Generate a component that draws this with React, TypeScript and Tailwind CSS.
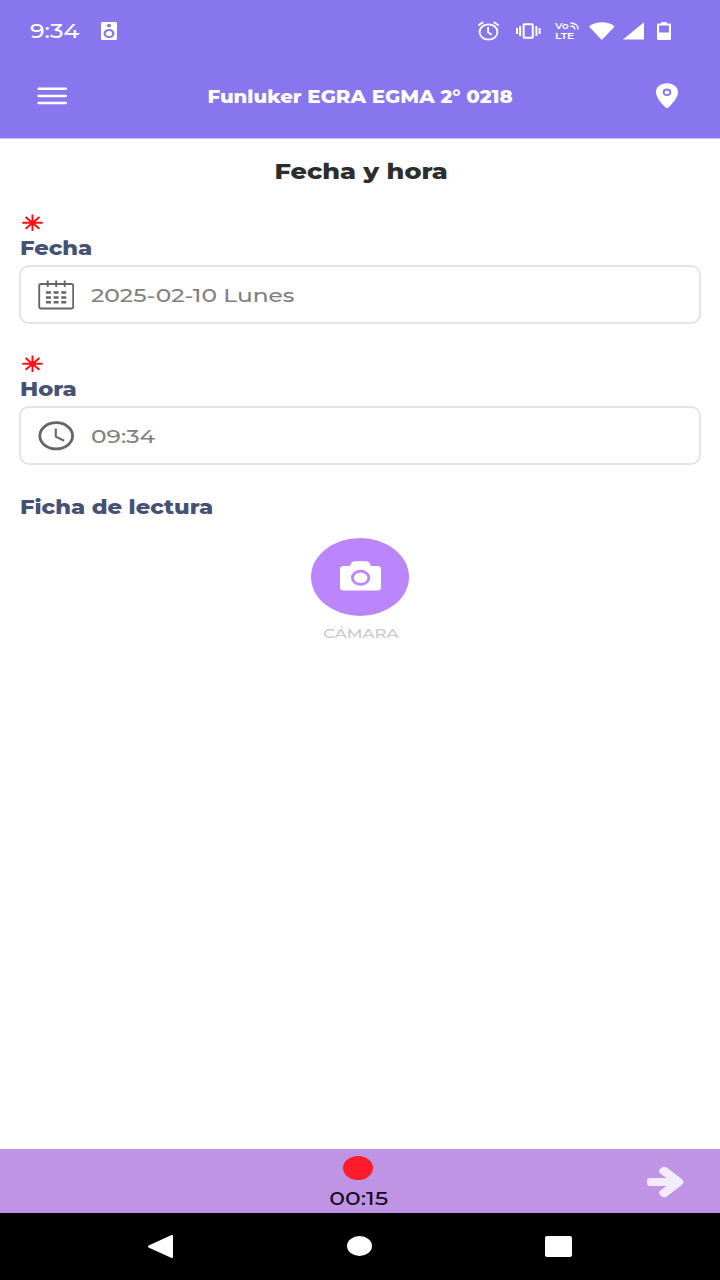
import type { ReactNode } from "react";

function RequiredMark() {
  return (
    <svg className="ml-[3px] block h-[17px] w-[21px]" viewBox="0 0 21 17" fill="none" stroke="#ff0d12" strokeWidth="2" aria-label="Obligatorio">
      <path d="M10.5 0.6V17M0.3 8.8H20.7M3.6 2.9L17.4 14.7M17.4 2.9L3.6 14.7" />
    </svg>
  );
}

function CalendarIcon() {
  return (
    <svg className="h-[30px] w-[36px]" viewBox="0 0 36 30" fill="none" stroke="#666" strokeWidth="1.9">
      <rect x="1.2" y="4" width="34" height="24.5" rx="1.8" />
      <path d="M9.7 0.6V7M18.2 0.6V7M26.7 0.6V7" />
      <path d="M8 12.6H13M15.6 12.6H20.6M23.2 12.6H28.2M8 17.4H13M15.6 17.4H20.6M23.2 17.4H28.2M8 22.2H13M15.6 22.2H20.6M23.2 22.2H28.2" strokeWidth="2.5" />
    </svg>
  );
}

function ClockIcon() {
  return (
    <svg className="h-[30px] w-[36px]" viewBox="0 0 36 30" fill="none" stroke="#666">
      <ellipse cx="18.2" cy="14.8" rx="16.4" ry="13.1" strokeWidth="2.8" />
      <path d="M17.8 7.6V15.6L26.2 19.8" strokeWidth="2.1" />
    </svg>
  );
}

function Field({ label, icon, children }: { label: string; icon: ReactNode; children: string }) {
  return (
    <section>
      <RequiredMark />
      <h2 className="mt-[5px] h-[26px] pl-[1px] text-[19px] leading-[26px] font-extrabold text-[#465174]">
        <span className="inline-block origin-left scale-x-[1.19]">{label}</span>
      </h2>
      <div className="mt-[3px] flex h-[59px] w-[682px] items-center rounded-[10px] border-2 border-[#e4e4e4] pl-[17px]">
        {icon}
        <span className="mt-[3px] ml-[17px] text-[19px] leading-6 font-medium text-[#808080]">
          <span className="inline-block origin-left scale-x-[1.225]">{children}</span>
        </span>
      </div>
    </section>
  );
}

function StatusIcons() {
  return (
    <div className="flex items-center text-white">
      {/* alarm */}
      <svg className="h-[20px] w-[22px]" viewBox="0 0 22 20" fill="none" stroke="currentColor" strokeWidth="1.8">
        <ellipse cx="10.5" cy="11" rx="8.9" ry="7.7" />
        <path d="M10.1 6V11.3L13.7 13.8M0.3 4.4L5.3 1M20.7 4.4L15.7 1" />
      </svg>
      {/* vibrate */}
      <svg className="ml-[16px] h-[16px] w-[25px]" viewBox="0 0 25 16" fill="none" stroke="currentColor" strokeWidth="2">
        <rect x="7.6" y="1.3" width="9.2" height="13.4" rx="0.8" />
        <path d="M1 5V11M4.1 3V13M20.4 3V13M23.6 5V11" />
      </svg>
      <div className="relative ml-[14px] flex h-[20px] w-[24px] flex-col gap-px text-[9.2px] leading-[10px] font-semibold">
        <div className="h-[9px] w-[12px] origin-left scale-x-[1.12] leading-[9px]">Vo</div>
        <div className="h-[9px] w-[18px] origin-left scale-x-[1.17] leading-[9px]">LTE</div>
        <svg className="absolute top-[1px] right-0 h-[8px] w-[9px]" viewBox="0 0 9 8" fill="none" stroke="currentColor" strokeWidth="1.3">
          <path d="M0.5 1C5 1 8.2 3.7 8.2 7.5M0.5 4C3 4 4.8 5.3 4.8 7.5" />
        </svg>
      </div>
      {/* wifi */}
      <svg className="ml-[10px] h-[18px] w-[26px]" viewBox="0 0 26 18" fill="currentColor">
        <path d="M0 4.4C7 -1.2 19 -1.2 25.6 4.4L12.8 18Z" />
      </svg>
      {/* signal */}
      <svg className="ml-[8px] h-[18px] w-[22px]" viewBox="0 0 22 18" fill="currentColor">
        <path d="M21 0.3V17.5H0Z" />
      </svg>
      {/* battery */}
      <svg className="ml-[12px] h-[18px] w-[14px]" viewBox="0 0 14 18" fill="currentColor" fillRule="evenodd">
        <path d="M4.3 0H9.7V1.5H12.8Q14 1.5 14 2.7V16.8Q14 18 12.8 18H1.2Q0 18 0 16.8V2.7Q0 1.5 1.2 1.5H4.3ZM2.1 3.6V10.6H11.9V3.6Z" />
      </svg>
    </div>
  );
}

export default function App() {
  return (
    <div className="flex h-[1280px] w-[720px] flex-col overflow-hidden bg-white font-['Montserrat','Inter',sans-serif]">
      <header className="h-[139px] shrink-0 border-b border-[#c9c1f8] bg-[#8876ef] text-white">
        <div className="flex h-[62px] items-center justify-between pr-[49px] pl-[30px]">
          <div className="flex items-center">
            <span className="w-[71px] text-[20px] leading-6 font-medium">
              <span className="inline-block origin-left scale-x-[1.18]">9:34</span>
            </span>
            <svg className="h-[18px] w-[16px]" viewBox="0 0 16 18" fill="currentColor" fillRule="evenodd">
              <path d="M1.3 0H14.7Q16 0 16 1.3V16.7Q16 18 14.7 18H1.3Q0 18 0 16.7V1.3Q0 0 1.3 0ZM8 1.8A2.2 1.8 0 1 0 8 5.4A2.2 1.8 0 1 0 8 1.8ZM8 7A5.5 4.5 0 1 0 8 16A5.5 4.5 0 1 0 8 7Z" />
              <ellipse cx="8" cy="11.5" rx="3.1" ry="2.6" />
            </svg>
          </div>
          <StatusIcons />
        </div>
        <div className="flex h-[68px] items-center justify-between pr-[42px] pl-[37px]">
          <button aria-label="Menú">
            <svg className="block h-[18px] w-[30px]" viewBox="0 0 30 18" stroke="currentColor" strokeWidth="2.5" strokeLinecap="round">
              <path d="M1.6 1.7H28.8M1.6 8.9H28.8M1.6 16.1H28.8" />
            </svg>
          </button>
          <h1 className="mt-[1px] mr-[3px] text-[17.5px] leading-6 font-extrabold whitespace-nowrap">
            <span className="inline-block scale-x-[1.13]">Funluker EGRA EGMA 2° 0218</span>
          </h1>
          <svg className="h-[26px] w-[22px]" viewBox="0 0 22 26" fill="currentColor" fillRule="evenodd">
            <path d="M11 0.3C4.8 0.3 0 4 0 9.2C0 14.5 5.6 20.5 9.6 24.5Q11 25.7 12.4 24.5C16.4 20.5 22 14.5 22 9.2C22 4 17.2 0.3 11 0.3ZM11 5.6A4.3 3.7 0 1 1 11 13A4.3 3.7 0 1 1 11 5.6Z" />
            <ellipse cx="11" cy="9.3" rx="2.3" ry="1.9" />
          </svg>
        </div>
      </header>

      <main className="flex-1 px-[19px]">
        <h2 className="mt-[17px] ml-[2px] text-center text-[21.5px] leading-[30px] font-extrabold text-[#2d2d2d]">
          <span className="inline-block scale-x-[1.185]">Fecha y hora</span>
        </h2>
        <div className="mt-[28px] flex flex-col gap-[31px]">
          <Field label="Fecha" icon={<CalendarIcon />}>
            2025-02-10 Lunes
          </Field>
          <Field label="Hora" icon={<ClockIcon />}>
            09:34
          </Field>
        </div>
        <h2 className="mt-[30px] pl-[1px] text-[19px] leading-[26px] font-extrabold text-[#465174]">
          <span className="inline-block origin-left scale-x-[1.19]">Ficha de lectura</span>
        </h2>
        <button className="mx-auto mt-[17px] flex flex-col items-center">
          <span className="flex h-[78px] w-[98px] items-center justify-center rounded-[50%] bg-[#bb86fc] pb-[2px]">
            <svg className="h-[30px] w-[42px]" viewBox="0 0 42 30" fill="none">
              <path d="M4.8 5H10.9L12.4 1.8Q13.3 0.3 15.4 0.3H27.4Q29.5 0.3 30.4 1.8L31.9 5H38.4Q42 5 42 8.2V26.3Q42 29.5 38.4 29.5H4.8Q1 29.5 1 26.3V8.2Q1 5 4.8 5Z" fill="#fff" />
              <ellipse cx="21.6" cy="16.8" rx="8.2" ry="6.6" stroke="#bb86fc" strokeWidth="2.8" />
            </svg>
          </span>
          <span className="mt-[7px] ml-[1px] text-[13.5px] leading-5 font-medium text-[#c8c8cd]">
            <span className="inline-block scale-x-[1.22]">CÁMARA</span>
          </span>
        </button>
      </main>

      <footer className="shrink-0">
        <div className="grid h-[64px] grid-cols-3 bg-[#bf94e4]">
          <div className="col-start-2 flex flex-col items-center pt-[7px] pr-[4px]">
            <span className="h-[24px] w-[30px] rounded-[50%] bg-[#ff1b29]" />
            <span className="mt-[7px] ml-[1px] text-[19px] leading-6 font-medium text-[#130a1c]">
              <span className="inline-block scale-x-[1.24]">00:15</span>
            </span>
          </div>
          <button className="flex items-center justify-end pt-[2px] pr-[36px]" aria-label="Siguiente">
            <svg className="h-[32px] w-[38px]" viewBox="0 0 38 32" fill="#f2ecfa">
              <path d="M4 12H20.5L14.3 7.5Q11.6 5.3 14.3 2.7Q17.5 -0.6 20.8 1.6L36 13.2Q39.2 16 36 18.8L20.8 30.4Q17.5 32.6 14.3 29.3Q11.6 26.7 14.3 24.5L20.5 20H4Q1 20 1 17.2V14.8Q1 12 4 12Z" />
            </svg>
          </button>
        </div>
        <nav className="flex h-[67px] items-center justify-between bg-black pr-[148px] pb-[1px] pl-[147px]">
          <svg className="h-[24px] w-[26px]" viewBox="0 0 26 24" fill="#fff" stroke="#fff" strokeWidth="2" strokeLinejoin="round">
            <path d="M2 12.5L25 2V23Z" />
          </svg>
          <span className="h-[20px] w-[25px] rounded-[50%] bg-white" />
          <span className="h-[21px] w-[27px] rounded-[2px] bg-white" />
        </nav>
      </footer>
    </div>
  );
}
